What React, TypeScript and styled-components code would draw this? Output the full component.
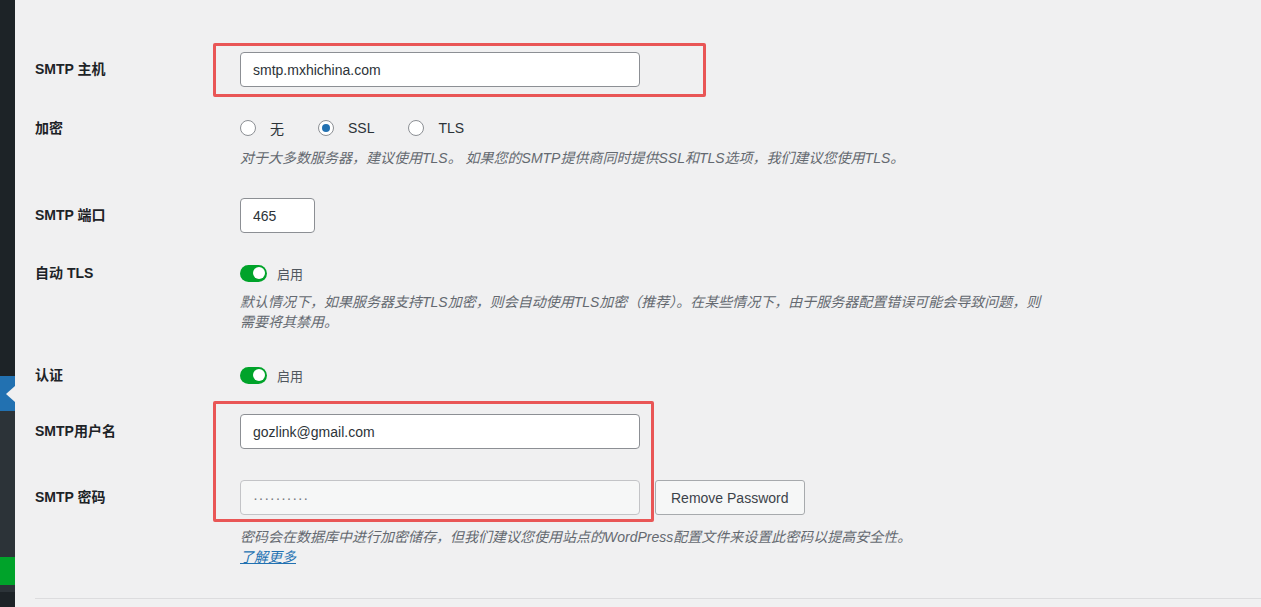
import React from "react";
import styled, { createGlobalStyle } from "styled-components";

const GlobalStyle = createGlobalStyle`
  html, body {
    margin: 0;
    padding: 0;
    background: #f0f0f1;
  }
  body {
    font-family: "Liberation Sans", "Noto Sans CJK SC", sans-serif;
    font-size: 14px;
    color: #1d2327;
    overflow: hidden;
  }
`;

const Page = styled.div`
  display: flex;
  min-height: 100vh;
`;

const Sidebar = styled.nav`
  width: 15px;
  flex-shrink: 0;
  display: flex;
  flex-direction: column;
  background: #1d2327;
`;

const MenuBand = styled.div<{ $h: number; $bg: string }>`
  position: relative;
  height: ${(p) => p.$h}px;
  background: ${(p) => p.$bg};
`;

const CurrentArrow = styled.span`
  position: absolute;
  right: 0;
  top: 50%;
  margin-top: -8px;
  width: 0;
  height: 0;
  border-top: 8px solid transparent;
  border-bottom: 8px solid transparent;
  border-right: 9px solid #f0f0f1;
`;

const Main = styled.main`
  position: relative;
  flex: 1;
  padding-left: 20px;
`;

const Settings = styled.div`
  display: flex;
  flex-direction: column;
`;

const Row = styled.div<{ $top: number }>`
  display: grid;
  grid-template-columns: 205px 1fr;
  align-items: start;
  margin-top: ${(p) => p.$top}px;
`;

const Label = styled.label<{ $line: number }>`
  font-weight: 600;
  font-size: 14px;
  line-height: ${(p) => p.$line}px;
  color: #1d2327;
`;

const Field = styled.div`
  display: flex;
  flex-direction: column;
  align-items: flex-start;
`;

const InputLine = styled.div`
  display: flex;
  align-items: center;
  gap: 15px;
`;

const TextInput = styled.input<{ $width: number; $muted?: boolean }>`
  box-sizing: border-box;
  width: ${(p) => p.$width}px;
  height: 35px;
  padding: 0 12px;
  margin: 0;
  border: 1px solid ${(p) => (p.$muted ? "#c3c4c7" : "#8c8f94")};
  border-radius: 4px;
  background: ${(p) => (p.$muted ? "#f6f7f7" : "#ffffff")};
  color: ${(p) => (p.$muted ? "#787c82" : "#2c3338")};
  font-family: "Liberation Sans", "Noto Sans CJK SC", sans-serif;
  font-size: ${(p) => (p.$muted ? "15px" : "14px")};
  letter-spacing: ${(p) => (p.$muted ? "0.6px" : "normal")};
  outline: none;
`;

const Button = styled.button`
  box-sizing: border-box;
  height: 35px;
  padding: 0 15px;
  border: 1px solid #a7aaad;
  border-radius: 3px;
  background: #f6f7f7;
  color: #3c434a;
  font-family: "Liberation Sans", sans-serif;
  font-size: 14px;
  cursor: pointer;
`;

const RadioGroup = styled.div`
  display: flex;
  align-items: center;
  height: 20px;
`;

const RadioOption = styled.label`
  display: flex;
  align-items: center;
  margin-right: 34px;
  font-size: 14px;
  color: #2c3338;
`;

const RadioCircle = styled.span<{ $checked?: boolean }>`
  box-sizing: border-box;
  width: 16px;
  height: 16px;
  margin-right: 14px;
  border: 1px solid #8c8f94;
  border-radius: 50%;
  background: #ffffff;
  display: flex;
  align-items: center;
  justify-content: center;

  &::after {
    content: "";
    width: 8px;
    height: 8px;
    border-radius: 50%;
    background: ${(p) => (p.$checked ? "#2271b1" : "transparent")};
  }
`;

const ToggleLine = styled.div`
  display: flex;
  align-items: center;
  height: 20px;
`;

const Switch = styled.span<{ $on?: boolean }>`
  position: relative;
  width: 27px;
  height: 17px;
  border-radius: 9px;
  background: ${(p) => (p.$on ? "#00a32a" : "#a7aaad")};

  &::after {
    content: "";
    position: absolute;
    top: 2.5px;
    ${(p) => (p.$on ? "right: 2.5px;" : "left: 2.5px;")}
    width: 12px;
    height: 12px;
    border-radius: 50%;
    background: #ffffff;
  }
`;

const ToggleText = styled.span`
  margin-left: 10px;
  font-size: 13px;
  color: #50575e;
`;

const Description = styled.p<{ $space?: number }>`
  margin: ${(p) => p.$space ?? 10}px 0 0;
  max-width: 812px;
  font-size: 14px;
  font-style: italic;
  line-height: 20px;
  color: #646970;
`;

const MoreLink = styled.a`
  display: block;
  font-size: 14px;
  font-style: italic;
  line-height: 20px;
  color: #2271b1;
  text-decoration: underline;
`;

const Divider = styled.hr`
  margin: 31px 0 0;
  border: 0;
  border-top: 1px solid #dcdcde;
`;

const Highlight = styled.div<{ $top: number; $left: number; $w: number; $h: number }>`
  position: absolute;
  box-sizing: border-box;
  top: ${(p) => p.$top}px;
  left: ${(p) => p.$left}px;
  width: ${(p) => p.$w}px;
  height: ${(p) => p.$h}px;
  border: 3px solid #e95656;
  border-radius: 2px;
  pointer-events: none;
`;

export default function App() {
  return (
    <Page>
      <GlobalStyle />
      <Sidebar>
        <MenuBand $h={376} $bg="#1d2327" />
        <MenuBand $h={35} $bg="#2271b1">
          <CurrentArrow />
        </MenuBand>
        <MenuBand $h={146} $bg="#2c3338" />
        <MenuBand $h={28} $bg="#00a32a" />
        <MenuBand $h={7} $bg="#2c3338" />
      </Sidebar>
      <Main>
        <Settings>
          <Row $top={52}>
            <Label $line={35}>SMTP 主机</Label>
            <Field>
              <TextInput $width={400} defaultValue="smtp.mxhichina.com" />
            </Field>
          </Row>

          <Row $top={31}>
            <Label $line={20}>加密</Label>
            <Field>
              <RadioGroup>
                <RadioOption>
                  <RadioCircle />无
                </RadioOption>
                <RadioOption>
                  <RadioCircle $checked />SSL
                </RadioOption>
                <RadioOption>
                  <RadioCircle />TLS
                </RadioOption>
              </RadioGroup>
              <Description>
                对于大多数服务器，建议使用TLS。 如果您的SMTP提供商同时提供SSL和TLS选项，我们建议您使用TLS。
              </Description>
            </Field>
          </Row>

          <Row $top={30}>
            <Label $line={35}>SMTP 端口</Label>
            <Field>
              <TextInput $width={75} defaultValue="465" />
            </Field>
          </Row>

          <Row $top={30}>
            <Label $line={20}>自动 TLS</Label>
            <Field>
              <ToggleLine>
                <Switch $on />
                <ToggleText>启用</ToggleText>
              </ToggleLine>
              <Description $space={9}>
                默认情况下，如果服务器支持TLS加密，则会自动使用TLS加密（推荐）。在某些情况下，由于服务器配置错误可能会导致问题，则需要将其禁用。
              </Description>
            </Field>
          </Row>

          <Row $top={33}>
            <Label $line={20}>认证</Label>
            <Field>
              <ToggleLine>
                <Switch $on />
                <ToggleText>启用</ToggleText>
              </ToggleLine>
            </Field>
          </Row>

          <Row $top={29}>
            <Label $line={35}>SMTP用户名</Label>
            <Field>
              <TextInput $width={400} defaultValue="gozlink@gmail.com" />
            </Field>
          </Row>

          <Row $top={31}>
            <Label $line={35}>SMTP 密码</Label>
            <Field>
              <InputLine>
                <TextInput $width={400} $muted disabled value="··········" readOnly />
                <Button type="button">Remove Password</Button>
              </InputLine>
              <Description $space={12}>
                密码会在数据库中进行加密储存，但我们建议您使用站点的WordPress配置文件来设置此密码以提高安全性。
                <MoreLink href="#">了解更多</MoreLink>
              </Description>
            </Field>
          </Row>
        </Settings>
        <Divider />

        <Highlight $top={43} $left={198} $w={493} $h={54} />
        <Highlight $top={401} $left={198} $w={441} $h={121} />
      </Main>
    </Page>
  );
}
